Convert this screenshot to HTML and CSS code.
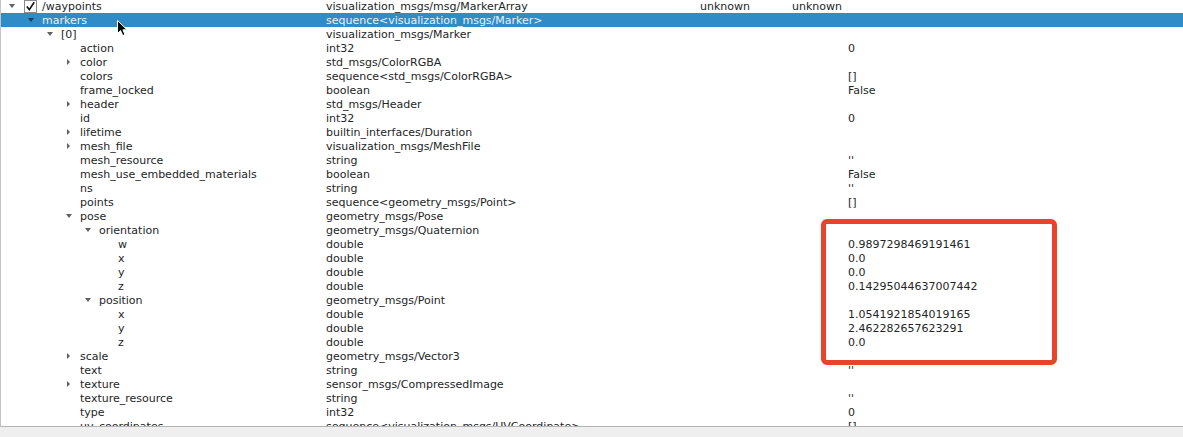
FILE: index.html
```html
<!DOCTYPE html>
<html>
<head>
<meta charset="utf-8">
<link rel="stylesheet" href="styles.css">
</head>
<body>
<div class="tree">
  <div class="rows">
    <div class="row"><div class="name l0"><span class="tw down"></span><span class="check"><svg width="11" height="11" viewBox="0 0 11 11"><path d="M1.8 5.6 L4.3 8.6 L9.2 1.2" fill="none" stroke="#111" stroke-width="1.6"/></svg></span><span>/waypoints</span></div><div class="type">visualization_msgs/msg/MarkerArray</div><div class="bw">unknown</div><div class="hz">unknown</div><div class="val"></div></div>
    <div class="row sel"><div class="name l1"><span class="tw down"></span><span>markers</span></div><div class="type">sequence&lt;visualization_msgs/Marker&gt;</div><div class="bw"></div><div class="hz"></div><div class="val"></div></div>
    <div class="row"><div class="name l2"><span class="tw down"></span><span>[0]</span></div><div class="type">visualization_msgs/Marker</div><div class="bw"></div><div class="hz"></div><div class="val"></div></div>
    <div class="row"><div class="name l3"><span class="tw"></span><span>action</span></div><div class="type">int32</div><div class="bw"></div><div class="hz"></div><div class="val">0</div></div>
    <div class="row"><div class="name l3"><span class="tw right"></span><span>color</span></div><div class="type">std_msgs/ColorRGBA</div><div class="bw"></div><div class="hz"></div><div class="val"></div></div>
    <div class="row"><div class="name l3"><span class="tw"></span><span>colors</span></div><div class="type">sequence&lt;std_msgs/ColorRGBA&gt;</div><div class="bw"></div><div class="hz"></div><div class="val">[]</div></div>
    <div class="row"><div class="name l3"><span class="tw"></span><span>frame_locked</span></div><div class="type">boolean</div><div class="bw"></div><div class="hz"></div><div class="val">False</div></div>
    <div class="row"><div class="name l3"><span class="tw right"></span><span>header</span></div><div class="type">std_msgs/Header</div><div class="bw"></div><div class="hz"></div><div class="val"></div></div>
    <div class="row"><div class="name l3"><span class="tw"></span><span>id</span></div><div class="type">int32</div><div class="bw"></div><div class="hz"></div><div class="val">0</div></div>
    <div class="row"><div class="name l3"><span class="tw right"></span><span>lifetime</span></div><div class="type">builtin_interfaces/Duration</div><div class="bw"></div><div class="hz"></div><div class="val"></div></div>
    <div class="row"><div class="name l3"><span class="tw right"></span><span>mesh_file</span></div><div class="type">visualization_msgs/MeshFile</div><div class="bw"></div><div class="hz"></div><div class="val"></div></div>
    <div class="row"><div class="name l3"><span class="tw"></span><span>mesh_resource</span></div><div class="type">string</div><div class="bw"></div><div class="hz"></div><div class="val">''</div></div>
    <div class="row"><div class="name l3"><span class="tw"></span><span>mesh_use_embedded_materials</span></div><div class="type">boolean</div><div class="bw"></div><div class="hz"></div><div class="val">False</div></div>
    <div class="row"><div class="name l3"><span class="tw"></span><span>ns</span></div><div class="type">string</div><div class="bw"></div><div class="hz"></div><div class="val">''</div></div>
    <div class="row"><div class="name l3"><span class="tw"></span><span>points</span></div><div class="type">sequence&lt;geometry_msgs/Point&gt;</div><div class="bw"></div><div class="hz"></div><div class="val">[]</div></div>
    <div class="row"><div class="name l3"><span class="tw down"></span><span>pose</span></div><div class="type">geometry_msgs/Pose</div><div class="bw"></div><div class="hz"></div><div class="val"></div></div>
    <div class="row"><div class="name l4"><span class="tw down"></span><span>orientation</span></div><div class="type">geometry_msgs/Quaternion</div><div class="bw"></div><div class="hz"></div><div class="val"></div></div>
    <div class="row"><div class="name l5"><span class="tw"></span><span>w</span></div><div class="type">double</div><div class="bw"></div><div class="hz"></div><div class="val">0.9897298469191461</div></div>
    <div class="row"><div class="name l5"><span class="tw"></span><span>x</span></div><div class="type">double</div><div class="bw"></div><div class="hz"></div><div class="val">0.0</div></div>
    <div class="row"><div class="name l5"><span class="tw"></span><span>y</span></div><div class="type">double</div><div class="bw"></div><div class="hz"></div><div class="val">0.0</div></div>
    <div class="row"><div class="name l5"><span class="tw"></span><span>z</span></div><div class="type">double</div><div class="bw"></div><div class="hz"></div><div class="val">0.14295044637007442</div></div>
    <div class="row"><div class="name l4"><span class="tw down"></span><span>position</span></div><div class="type">geometry_msgs/Point</div><div class="bw"></div><div class="hz"></div><div class="val"></div></div>
    <div class="row"><div class="name l5"><span class="tw"></span><span>x</span></div><div class="type">double</div><div class="bw"></div><div class="hz"></div><div class="val">1.0541921854019165</div></div>
    <div class="row"><div class="name l5"><span class="tw"></span><span>y</span></div><div class="type">double</div><div class="bw"></div><div class="hz"></div><div class="val">2.462282657623291</div></div>
    <div class="row"><div class="name l5"><span class="tw"></span><span>z</span></div><div class="type">double</div><div class="bw"></div><div class="hz"></div><div class="val">0.0</div></div>
    <div class="row"><div class="name l3"><span class="tw right"></span><span>scale</span></div><div class="type">geometry_msgs/Vector3</div><div class="bw"></div><div class="hz"></div><div class="val"></div></div>
    <div class="row"><div class="name l3"><span class="tw"></span><span>text</span></div><div class="type">string</div><div class="bw"></div><div class="hz"></div><div class="val">''</div></div>
    <div class="row"><div class="name l3"><span class="tw right"></span><span>texture</span></div><div class="type">sensor_msgs/CompressedImage</div><div class="bw"></div><div class="hz"></div><div class="val"></div></div>
    <div class="row"><div class="name l3"><span class="tw"></span><span>texture_resource</span></div><div class="type">string</div><div class="bw"></div><div class="hz"></div><div class="val">''</div></div>
    <div class="row"><div class="name l3"><span class="tw"></span><span>type</span></div><div class="type">int32</div><div class="bw"></div><div class="hz"></div><div class="val">0</div></div>
    <div class="row"><div class="name l3"><span class="tw"></span><span>uv_coordinates</span></div><div class="type">sequence&lt;visualization_msgs/UVCoordinate&gt;</div><div class="bw"></div><div class="hz"></div><div class="val">[]</div></div>
  </div>
  <div class="highlight-box"></div>
  <svg class="cursor" width="12" height="17" viewBox="0 0 12 17"><path d="M0.5 0.5 L0.5 13.5 L3.6 10.6 L5.8 15.6 L8 14.6 L5.9 9.8 L10 9.8 Z" fill="#000" stroke="#fff" stroke-width="1"/></svg>
</div>
<div class="footer"></div>
</body>
</html>
```

FILE: styles.css
```css
*, *::before, *::after {
  box-sizing: border-box;
}
html, body {
  margin: 0;
  padding: 0;
  background: #efefef;
}
body {
  width: 1183px;
  height: 437px;
  overflow: hidden;
  font-family: "DejaVu Sans", sans-serif;
  font-size: 11px;
  color: #232627;
}
.tree {
  position: relative;
  height: 427px;
  background: #fff;
  border-left: 1px solid #c4c4c4;
  border-bottom: 1px solid #b4b4b4;
  overflow: hidden;
}
.rows {
  margin-top: -1px;
}
.row {
  display: flex;
  height: 14px;
  line-height: 15px;
  white-space: nowrap;
}
.row.sel {
  background: #308cc6;
  color: #e6f1fa;
}
.name {
  width: 325px;
  flex: none;
  display: flex;
  align-items: flex-start;
  overflow: hidden;
}
.type {
  width: 374px;
  flex: none;
}
.bw {
  width: 92px;
  flex: none;
}
.hz {
  width: 56px;
  flex: none;
}
.val {
  flex: 1 1 auto;
}
.l0 { padding-left: 0; }
.l1 { padding-left: 19px; }
.l2 { padding-left: 38px; }
.l3 { padding-left: 57px; }
.l4 { padding-left: 76px; }
.l5 { padding-left: 95px; }
.tw {
  width: 22px;
  height: 14px;
  flex: none;
  position: relative;
}
.tw.down::before {
  content: "";
  position: absolute;
  left: 8px;
  top: 5px;
  border-left: 3.5px solid transparent;
  border-right: 3.5px solid transparent;
  border-top: 4px solid #606060;
}
.row.sel .tw.down::before {
  border-top-color: #1a3f5a;
}
.tw.right::before {
  content: "";
  position: absolute;
  left: 9px;
  top: 4px;
  border-top: 3px solid transparent;
  border-bottom: 3px solid transparent;
  border-left: 3.5px solid #606060;
}
.check {
  width: 13px;
  height: 13px;
  border: 1px solid #8a8a8a;
  background: #fff;
  margin-top: 1px;
  margin-left: 1px;
  margin-right: 5px;
  flex: none;
  display: flex;
}
.highlight-box {
  position: absolute;
  left: 820px;
  top: 219px;
  width: 236px;
  height: 146px;
  border: 5px solid #e9432c;
  border-radius: 6px;
}
.cursor {
  position: absolute;
  left: 116px;
  top: 20px;
}
.footer {
  height: 10px;
}
```
